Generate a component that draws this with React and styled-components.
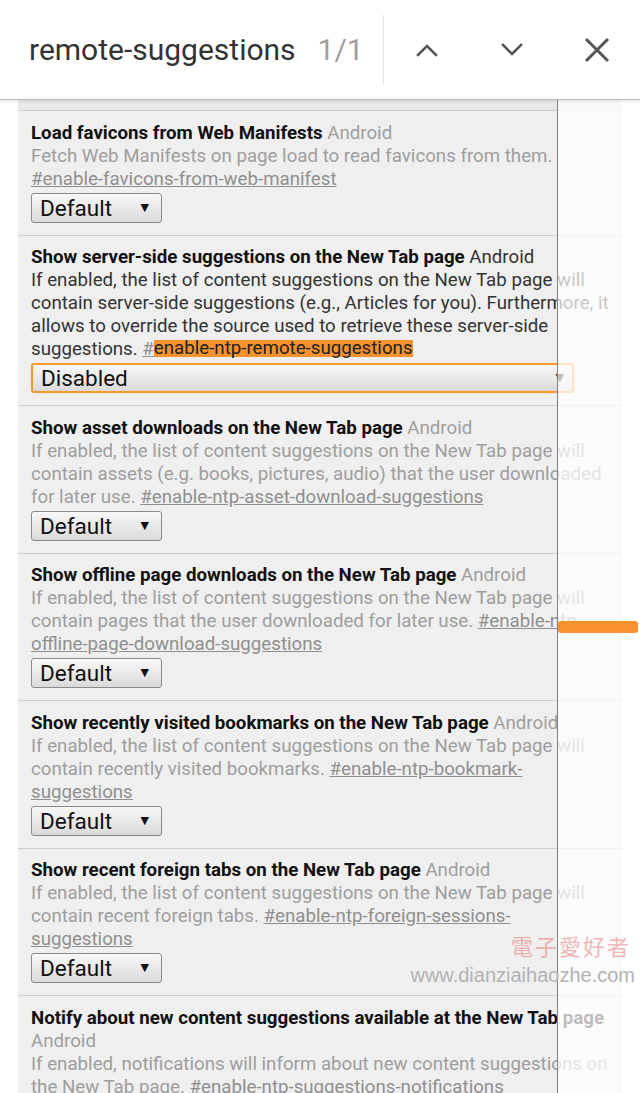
import React from 'react';
import styled, { createGlobalStyle } from 'styled-components';

const Global = createGlobalStyle`
  html, body { margin: 0; padding: 0; background: #fff; }
  body { font-family: Roboto, "Noto Sans", "Liberation Sans", sans-serif; overflow: hidden; }
`;

const Page = styled.div`
  position: relative;
  width: 640px;
  height: 1093px;
  overflow: hidden;
  background: #fff;
`;

const FindBar = styled.div`
  position: relative;
  z-index: 5;
  height: 99px;
  display: flex;
  align-items: center;
  background: #fff;
  border-bottom: 1px solid #bdbdbd;
  box-shadow: 0 1px 3px rgba(0, 0, 0, 0.12);
`;

const QueryBox = styled.div`
  box-sizing: border-box;
  width: 383px;
  padding-left: 29px;
  display: flex;
  align-items: baseline;
  gap: 22px;
  font-size: 30px;
  line-height: 36px;
`;

const Query = styled.span`
  color: #333;
`;

const Count = styled.span`
  color: #9e9e9e;
`;

const Divider = styled.div`
  width: 1px;
  height: 70px;
  background: #e2e2e2;
`;

const IconButton = styled.div`
  width: 85px;
  height: 99px;
  display: flex;
  align-items: center;
  justify-content: center;
`;

const Content = styled.div`
  position: relative;
`;

const Stub = styled.div`
  margin-left: 18px;
  width: 604px;
  height: 10px;
  background: #e8e8e8;
  border-bottom: 1px solid #cdcdcd;
`;

const Card = styled.div`
  box-sizing: border-box;
  margin-left: 18px;
  width: 604px;
  padding: 10.5px 11px 12px 13px;
  background: #efefef;
  border-bottom: 1px solid #cdcdcd;
  font-size: 18.7px;
  line-height: 23px;
  color: ${p => (p.$active ? '#333' : '#9e9e9e')};
`;

const Title = styled.span`
  font-weight: 700;
  color: #111;
`;

const Desc = styled.div``;

const Link = styled.span`
  text-decoration: underline;
  color: #8f8f8f;
`;

const Match = styled.span`
  display: inline-block;
  background: #f7922e;
  color: #222;
  line-height: 17px;
  vertical-align: 1px;
`;

const Select = styled.div`
  box-sizing: border-box;
  margin-top: 2px;
  width: ${p => (p.$wide ? '543px' : '131px')};
  height: 30px;
  display: flex;
  align-items: center;
  justify-content: space-between;
  padding: 0 ${p => (p.$wide ? '8px' : '12px')} 0 8px;
  border: ${p => (p.$focused ? '2px solid #f59a2a' : '1px solid #8a8a8a')};
  border-radius: 3px;
  background: linear-gradient(#f8f8f8, #dadada);
  font-size: 22.5px;
  line-height: 26px;
  color: #111;
`;

const Arrow = styled.span`
  font-family: "DejaVu Sans", sans-serif;
  font-size: 11px;
  color: #111;
`;

const Fade = styled.div`
  position: absolute;
  top: 0;
  bottom: 0;
  left: 557px;
  right: 0;
  background: rgba(255, 255, 255, 0.72);
  border-left: 1px solid #808080;
  z-index: 2;
`;

const Tick = styled.div`
  position: absolute;
  z-index: 3;
  left: 558px;
  top: 521px;
  width: 80px;
  height: 12px;
  border-radius: 3px;
  background: #f7922e;
`;

const Watermark = styled.div`
  position: absolute;
  z-index: 6;
  right: 5px;
  top: 930px;
  display: flex;
  flex-direction: column;
  align-items: flex-end;
  gap: 4px;
`;

const WmCn = styled.span`
  font-family: "Noto Sans CJK TC", "Noto Sans CJK SC", sans-serif;
  font-size: 22px;
  line-height: 30px;
  letter-spacing: 2px;
  color: rgba(230, 110, 110, 0.5);
  margin-right: 4px;
`;

const WmUrl = styled.span`
  font-family: "Liberation Sans", Arial, sans-serif;
  font-size: 20px;
  line-height: 22px;
  color: #b3b3b3;
`;

const Chevron = ({ up }) => (
  <svg width="24" height="14" viewBox="0 0 24 14" fill="none" stroke="#555" strokeWidth="2.6" strokeLinecap="square">
    {up ? <polyline points="3,12 12,3 21,12" /> : <polyline points="3,2 12,11 21,2" />}
  </svg>
);

const Close = () => (
  <svg width="26" height="26" viewBox="0 0 26 26" fill="none" stroke="#555" strokeWidth="3">
    <line x1="2" y1="2" x2="24" y2="24" />
    <line x1="24" y1="2" x2="2" y2="24" />
  </svg>
);

const experiments = [
  {
    title: 'Load favicons from Web Manifests',
    desc: 'Fetch Web Manifests on page load to read favicons from them.',
    link: '#enable-favicons-from-web-manifest',
  },
  {
    title: 'Show server-side suggestions on the New Tab page',
    desc: 'If enabled, the list of content suggestions on the New Tab page will contain server-side suggestions (e.g., Articles for you). Furthermore, it allows to override the source used to retrieve these server-side suggestions.',
    link: '#',
    match: 'enable-ntp-remote-suggestions',
    active: true,
    value: 'Disabled',
  },
  {
    title: 'Show asset downloads on the New Tab page',
    desc: 'If enabled, the list of content suggestions on the New Tab page will contain assets (e.g. books, pictures, audio) that the user downloaded for later use.',
    link: '#enable-ntp-asset-download-suggestions',
  },
  {
    title: 'Show offline page downloads on the New Tab page',
    desc: 'If enabled, the list of content suggestions on the New Tab page will contain pages that the user downloaded for later use.',
    link: '#enable-ntp-offline-page-download-suggestions',
  },
  {
    title: 'Show recently visited bookmarks on the New Tab page',
    desc: 'If enabled, the list of content suggestions on the New Tab page will contain recently visited bookmarks.',
    link: '#enable-ntp-bookmark-suggestions',
  },
  {
    title: 'Show recent foreign tabs on the New Tab page',
    desc: 'If enabled, the list of content suggestions on the New Tab page will contain recent foreign tabs.',
    link: '#enable-ntp-foreign-sessions-suggestions',
  },
  {
    title: 'Notify about new content suggestions available at the New Tab page',
    desc: 'If enabled, notifications will inform about new content suggestions on the New Tab page.',
    link: '#enable-ntp-suggestions-notifications',
  },
];

export default function App() {
  return (
    <Page>
      <Global />
      <FindBar>
        <QueryBox>
          <Query>remote-suggestions</Query>
          <Count>1/1</Count>
        </QueryBox>
        <Divider />
        <IconButton><Chevron up /></IconButton>
        <IconButton><Chevron /></IconButton>
        <IconButton><Close /></IconButton>
      </FindBar>
      <Content>
        <Stub />
        {experiments.map((e, i) => (
          <Card key={i} $active={e.active}>
            <div>
              <Title>{e.title}</Title> Android
            </div>
            <Desc>
              {e.desc}{' '}
              <Link>{e.link}</Link>
              {e.match && <Match>{e.match}</Match>}
            </Desc>
            <Select $wide={!!e.value} $focused={!!e.value}>
              <span>{e.value || 'Default'}</span>
              <Arrow>▼</Arrow>
            </Select>
          </Card>
        ))}
        <Fade />
        <Tick />
      </Content>
      <Watermark>
        <WmCn>電子愛好者</WmCn>
        <WmUrl>www.dianziaihaozhe.com</WmUrl>
      </Watermark>
    </Page>
  );
}
